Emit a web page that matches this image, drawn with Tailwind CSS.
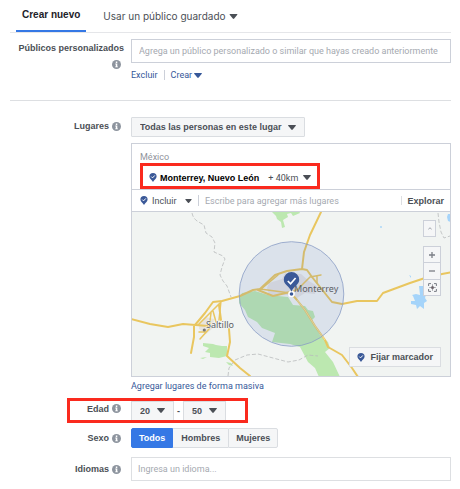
<!DOCTYPE html>
<html lang="es">
<head>
<meta charset="utf-8">
<meta name="viewport" content="width=device-width, initial-scale=1">
<title>Crear público</title>
<script src="https://cdn.jsdelivr.net/npm/@tailwindcss/browser@4"></script>
</head>
<body class="bg-white font-[Roboto,'Liberation_Sans',sans-serif] text-[9px] leading-[12px] text-[#4b4f56]">
<svg class="hidden" aria-hidden="true">
  <symbol id="caret" viewBox="0 0 8 5"><path d="M.6 0h6.800q.8.1.4.8L4.700 4.600q-.7.7-1.400 0L.2.8Q-.2.1.6 0z" fill="currentColor"/></symbol>
  <symbol id="info" viewBox="0 0 9 9"><circle cx="4.500" cy="4.500" r="4.500" fill="#8d949e"/><path d="M3.800 1.600h1.500v1.300H3.800zM3.300 3.600h2v2.800h.6v.9H3.200v-.9h.6V4.500h-.5z" fill="#fff"/></symbol>
  <symbol id="pin" viewBox="0 0 8 10"><path d="M4 0a4 3.900 0 0 1 4 3.900C8 6.400 5.300 7.400 4 10 2.700 7.400 0 6.400 0 3.900A4 3.900 0 0 1 4 0z" fill="#3b5998"/><path d="M2.100 4l1.400 1.400L6 2.700" fill="none" stroke="#fff" stroke-width="1.100"/></symbol>
</svg>
<main class="pl-[10px] pr-[9px]">
  <nav class="flex h-[33px] items-stretch border-b border-[#e5e6e9] font-['Liberation_Sans',sans-serif] text-[10px] leading-[14px]">
    <button class="ml-[6px] border-b-2 border-[#3578e5] px-[6px] font-bold text-[#1d2129]">Crear nuevo</button>
    <button class="ml-[11px] flex items-center gap-[3px] px-[6px] font-[Inter,'Liberation_Sans',sans-serif]">Usar un público guardado <svg class="h-[5px] w-[9px]"><use href="#caret"/></svg></button>
  </nav>

  <form>
    <section class="grid grid-cols-[114px_minmax(0,1fr)] gap-x-[7px] border-b border-[#dddfe2] pt-[6px] pb-[19px]">
      <div class="flex flex-col items-end pt-[3px]">
        <label for="publicos" class="whitespace-nowrap font-['Liberation_Sans',sans-serif] font-bold">Públicos personalizados</label>
        <svg class="mt-[6px] mr-[3px] size-[9px]"><use href="#info"/></svg>
      </div>
      <div>
        <input id="publicos" class="block h-[24px] w-full border border-[#ccd0d9] px-[7px] placeholder:text-[#a5a9b0]" placeholder="Agrega un público personalizado o similar que hayas creado anteriormente">
        <div class="mt-[6px] flex items-center text-[#365899]">
          <a href="#">Excluir</a>
          <span class="mx-[6px] h-[10px] w-px bg-[#ccd0d9]"></span>
          <button type="button" class="flex items-center gap-[2px]">Crear <svg class="h-[5px] w-[8px]"><use href="#caret"/></svg></button>
        </div>
      </div>
    </section>

    <section class="grid grid-cols-[114px_minmax(0,1fr)] gap-x-[7px] pt-[16px]">
      <div class="flex h-[18px] items-center justify-end gap-[3px] pr-[3px]">
        <label for="lugares" class="font-['Liberation_Sans',sans-serif] font-bold">Lugares</label><svg class="size-[9px]"><use href="#info"/></svg>
      </div>
      <div>
        <div class="relative inline-flex items-center align-top">
          <select id="lugares" class="h-[20px] appearance-none rounded-[1px] border border-[#dadde1] bg-[#f5f6f7] pr-[22px] pl-[8px] font-['Liberation_Sans',sans-serif] font-bold"><option>Todas las personas en este lugar</option></select>
          <svg class="pointer-events-none absolute right-[9px] h-[5px] w-[8px]"><use href="#caret"/></svg>
        </div>
        <div class="mt-[6px] border border-[#ccd0d9]">
          <div class="px-[8px] pt-[7px] text-[#90949c]">México</div>
          <div class="flex px-[8px]">
            <div class="flex h-[26px] items-center border-[3px] border-[#fa2a1e] pt-[3px] pr-[6px] pl-[6px]">
              <svg class="mr-[3px] h-[9px] w-[8px]"><use href="#pin"/></svg>
              <b class="font-['Liberation_Sans',sans-serif] text-black">Monterrey, Nuevo León</b>
              <button type="button" class="ml-[9px] flex items-center gap-[5px]">+ 40km <svg class="h-[5px] w-[8px]"><use href="#caret"/></svg></button>
            </div>
          </div>
          <div class="flex h-[23px] items-center border-y border-[#ccd0d9] pr-[6px] pl-[8px]">
            <svg class="h-[9px] w-[8px]"><use href="#pin"/></svg>
            <div class="relative flex items-center">
              <select aria-label="Incluir o excluir" class="appearance-none pr-[15px] pl-[4px]"><option>Incluir</option></select>
              <svg class="pointer-events-none absolute right-0 h-[4px] w-[7px]"><use href="#caret"/></svg>
            </div>
            <span class="mx-[6px] h-[11px] w-px bg-[#ccd0d9]"></span>
            <input aria-label="Agregar lugares" class="min-w-0 flex-1 px-0 placeholder:text-[#a5a9b0]" placeholder="Escribe para agregar más lugares">
            <span class="mr-[5px] h-[9px] w-px bg-[#dddfe2]"></span>
            <button type="button" class="font-['Liberation_Sans',sans-serif] font-bold">Explorar</button>
          </div>
          <div class="relative h-[164px] overflow-hidden bg-[#f1f4f2]">
            <svg class="block h-full w-full" viewBox="132 212 318 164" preserveAspectRatio="xMidYMid slice" role="img" aria-label="Mapa de Monterrey y Saltillo">
              <g fill="#bce8b0">
                <path d="M271 211l5 5 1 3 4 3 1 6 3-1-2-7 5-3-1-3 4-1 2 3 7-3-1-2z"/>
                <path d="M203 343l10 1 3 1 6 1 5 0 0 10-8 2-9-1 0-4-5-1 4-4-6-2zM200 358l7-1-4 2zM226 362l5 1 2 3-4-1z"/>
                <path d="M239 298L242 293 255 291 268 295 288 297 293 305 305 306 308 310 313 311 315 317 312 320 320 335 328 342 330 348 325 352 333 362 340 377 319 377 315 368 308 362 300 347 290 344 272 342 275 333 262 328 257 322 248 317 245 310 239 303z"/>
              </g>
              <path d="M267 288l2-5 13-4 3-6 16 1 8 7 8 5-2 8-10-1-8 5-10-3-18 1z" fill="#e4e2e2"/>
              <path d="M199 323l7-6 8 2-1 9-7 6-7-5z" fill="#e7e4de"/>
              <g fill="#a5d4fa"><path d="M419 286h5v5h3l-2 7 2 3-3 2v6l-4-3-3 3-1-4-5-1v-3l4 0-2-5-1-1 4-1 4 1zM448 214l3 0v8l-3-1-1-4z"/><circle cx="381" cy="227" r=".9"/><path d="M409 275l2 1v2z"/></g>
              <g fill="none" stroke="#b9bbbc" stroke-width=".8" stroke-dasharray="4 2">
                <path d="M192 213q1 5 5 8l7 4 2 8 6 4 3 6-1 9 9 4 2 3-3 8-2 8 3 6 4 5 4 11"/>
                <path d="M228 376l1-8 6-8 12-5 11-1 15 4 15 4 11-2 9-5 10 1"/><path d="M438 213l1 9 2 10 3 6 6-2"/>
              </g>
              <g fill="none" stroke="#e9c65f" stroke-linecap="round" stroke-linejoin="round">
                <g stroke-width="2">
                  <path d="M131 319L150 324 168 327 183 324 208 326M195 325L205 313 213 302 222 301 240 296M194 326V337L191 353M219 305L221 320M229 329L230 342 227 356 240 368 250 376"/>
                  <path d="M240 296L253 290 260 289 275 275 287 271 302 269 304 252 310 235 321 212M302 269L307 270 312 277 320 287 332 302 342 304 357 301 377 301 383 293 410 283 425 278 442 274 452 272"/>
                  <path d="M258 290L273 296 290 292 297 300 305 310 315 326 325 340 328 347 342 355 352 368 358 377"/>
                </g>
                <path d="M198 325L213 310 220 303M213 311L216 322M211 313L209 329 200 339M199 332H206M260 289L290 293 298 289 310 277 321 275M317 276V283M260 290L278 275M221 301L219 320" stroke-width="1.500"/>
              </g>
              <path d="M297 300L305 310 315 326 325 340" fill="none" stroke="#fae7ad" stroke-width=".7"/>
              <circle cx="291.500" cy="294" r="52.300" fill="#5c7ec0" fill-opacity=".15" stroke="#8a9dc5" stroke-width=".8"/>
              <circle cx="204.300" cy="330" r="1.600" fill="#777"/>
              <text x="206" y="328" font-family="Noto Sans, sans-serif" font-size="9" fill="#5b5f66" stroke="#f4f5f3" stroke-width="1" paint-order="stroke">Saltillo</text>
              <text x="294" y="292" font-family="Noto Sans, sans-serif" font-size="9" fill="#5b5f66">Monterrey</text>
              <circle cx="291.500" cy="294" r="3.300" fill="#fff"/><circle cx="291.500" cy="294" r="1.800" fill="#3b5998"/>
              <path d="M291.500 272a7.700 7.700 0 0 1 7.700 7.700c0 5-5.700 6.500-7.700 12-2-5.500-7.700-7-7.700-12a7.700 7.700 0 0 1 7.700-7.700z" fill="#3b5998"/>
              <path d="M287.800 281l2.800 2.800 5-5.800" fill="none" stroke="#fff" stroke-width="1.700"/>
            </svg>
            <div class="absolute top-[8px] right-[9px] flex flex-col items-end text-[#7a7e86]">
              <button type="button" aria-label="Contraer mapa" class="mr-[5px] mb-[9px] flex h-[17px] w-[13px] items-center justify-center border border-[#ccd0d9] bg-[#f5f6f7]"><svg class="h-[3px] w-[4px]" viewBox="0 0 4 3"><path d="M.3 2.500L2 .7l1.700 1.800" fill="none" stroke="#999da5" stroke-width=".9"/></svg></button>
              <button type="button" aria-label="Acercar" class="flex h-[17px] w-[18px] items-center justify-center border border-[#ccd0d9] bg-[#f5f6f7]"><svg class="size-[6px]" viewBox="0 0 6 6"><path d="M0 3h6M3 0v6" stroke="currentColor" stroke-width="1.300"/></svg></button>
              <button type="button" aria-label="Alejar" class="flex h-[16px] w-[18px] items-center justify-center border-x border-[#ccd0d9] bg-[#f5f6f7]"><svg class="size-[6px]" viewBox="0 0 6 6"><path d="M0 3h6" stroke="currentColor" stroke-width="1.300"/></svg></button>
              <button type="button" aria-label="Centrar" class="flex h-[17px] w-[18px] items-center justify-center border border-[#ccd0d9] bg-[#f5f6f7]"><svg class="size-[9px]" viewBox="0 0 9 9"><path d="M.6 3V.6H3M6 .6h2.400V3M8.400 6v2.400H6M3 8.400H.6V6M4.500 1.500v1.200M4.500 6.300v1.200M1.500 4.500h1.200M6.300 4.500h1.200" fill="none" stroke="currentColor" stroke-width="1"/><circle cx="4.500" cy="4.500" r="1.500" fill="#6b6268"/></svg></button>
            </div>
            <button type="button" class="absolute right-[9px] bottom-[9px] flex h-[20px] items-center gap-[5px] border border-[#dadde1] bg-[#f5f6f7] px-[7px] font-['Liberation_Sans',sans-serif] font-bold"><svg class="h-[9px] w-[8px]"><use href="#pin"/></svg>Fijar marcador</button>
          </div>
        </div>
        <a href="#" class="mt-[3px] block text-[#365899]">Agregar lugares de forma masiva</a>
      </div>
    </section>

    <div class="relative mt-[6px] grid h-[25px] grid-cols-[114px_minmax(0,1fr)] gap-x-[7px]">
      <div class="flex items-center justify-end gap-[3px] pr-[3px] pb-[4px]">
        <label for="edad" class="font-['Liberation_Sans',sans-serif] font-bold">Edad</label><svg class="size-[9px]"><use href="#info"/></svg>
      </div>
      <div class="flex items-center gap-[3px] font-['Liberation_Sans',sans-serif] font-bold">
        <div class="relative flex items-center">
          <select id="edad" class="h-[20px] w-[43px] appearance-none border border-[#dadde1] bg-[#f5f6f7] pl-[8px]"><option>20</option><option>21</option></select>
          <svg class="pointer-events-none absolute right-[9px] h-[5px] w-[8px]"><use href="#caret"/></svg>
        </div>
        -
        <div class="relative flex items-center">
          <select aria-label="Edad máxima" class="h-[20px] w-[43px] appearance-none border border-[#dadde1] bg-[#f5f6f7] pl-[8px]"><option>50</option><option>51</option></select>
          <svg class="pointer-events-none absolute right-[9px] h-[5px] w-[8px]"><use href="#caret"/></svg>
        </div>
      </div>
      <div class="pointer-events-none absolute inset-y-0 left-[57px] w-[181px] border-[3px] border-[#fa2a1e]"></div>
    </div>

    <div class="mt-[5px] grid grid-cols-[114px_minmax(0,1fr)] gap-x-[7px]">
      <div class="flex items-center justify-end gap-[3px] pr-[3px] font-['Liberation_Sans',sans-serif] font-bold"><span id="sexo">Sexo</span><svg class="size-[9px]"><use href="#info"/></svg></div>
      <div role="group" aria-labelledby="sexo" class="flex h-[20px] font-['Liberation_Sans',sans-serif] font-bold">
        <button type="button" class="rounded-l-[2px] border border-[#3578e5] bg-[#3578e5] px-[7px] text-white">Todos</button>
        <button type="button" class="border-y border-[#dadde1] bg-[#f5f6f7] px-[8px]">Hombres</button>
        <button type="button" class="rounded-r-[2px] border border-[#dadde1] bg-[#f5f6f7] px-[7px]">Mujeres</button>
      </div>
    </div>

    <div class="mt-[9px] grid grid-cols-[114px_minmax(0,1fr)] gap-x-[7px]">
      <div class="flex items-center justify-end gap-[3px] pr-[3px]"><label for="idiomas" class="font-['Liberation_Sans',sans-serif] font-bold">Idiomas</label><svg class="size-[9px]"><use href="#info"/></svg></div>
      <input id="idiomas" class="h-[24px] w-full border border-[#dddfe2] px-[6px] placeholder:text-[#a5a9b0]" placeholder="Ingresa un idioma...">
    </div>
  </form>
</main>
</body>
</html>
